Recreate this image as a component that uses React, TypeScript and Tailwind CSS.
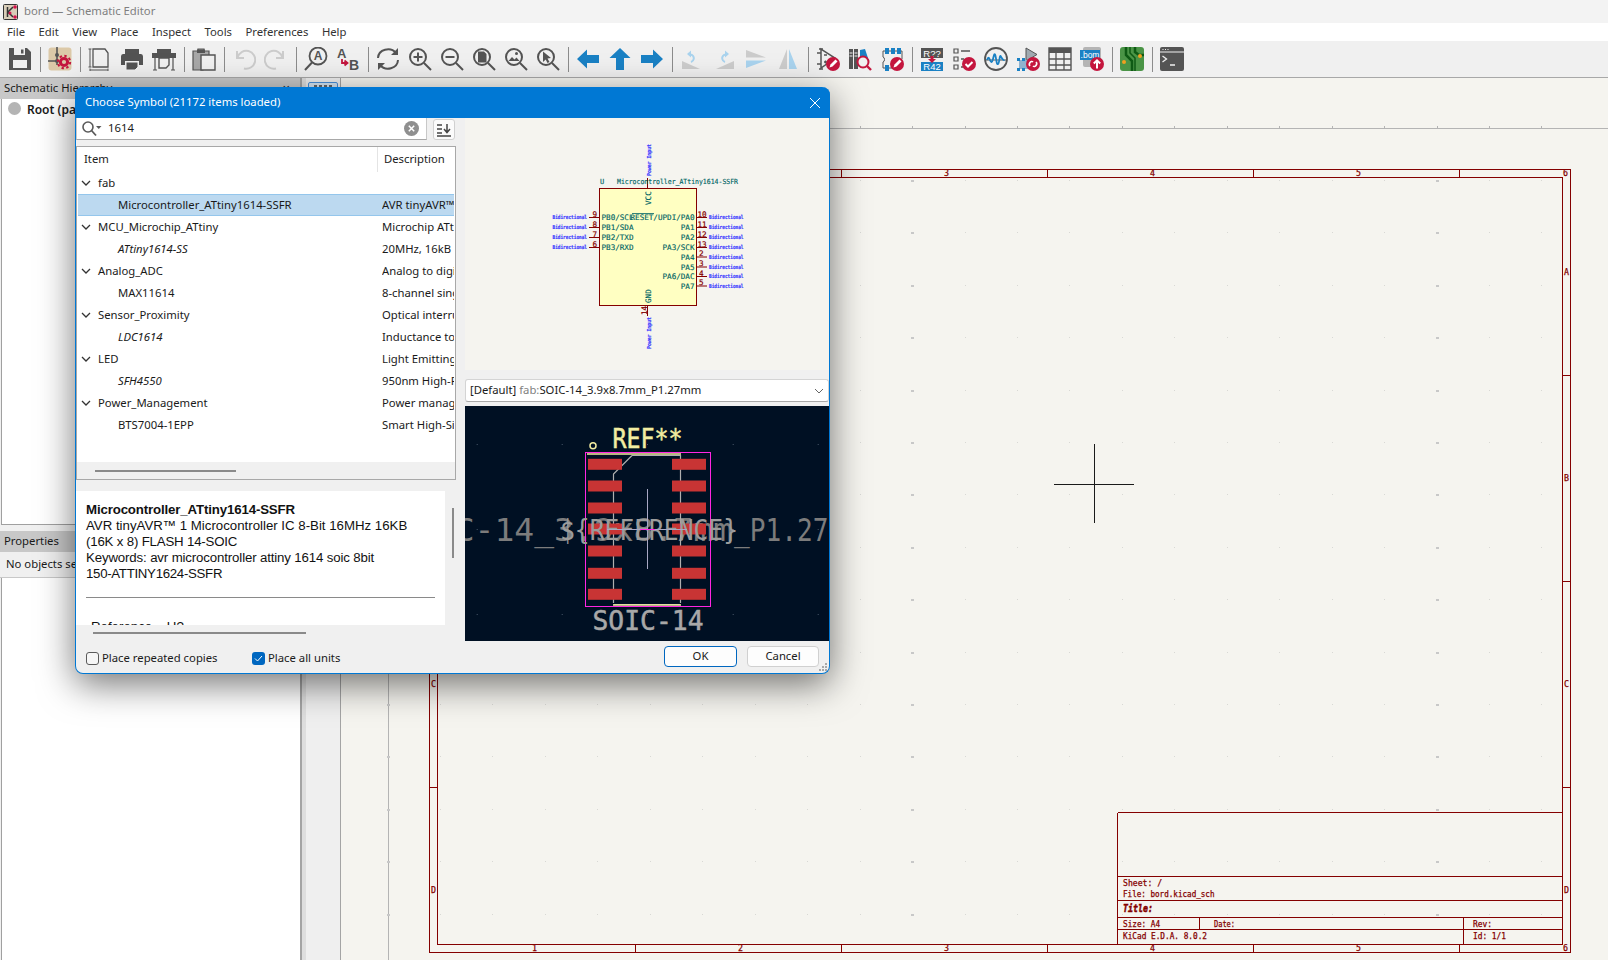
import React from 'react';

const DK = '#545454';
const BL = '#1a81c4';
const RD = '#c4163e';
const LG = '#cccccc';
const LB = '#a9d3ee';
const MONO = "'DejaVu Sans Mono', monospace";
const WIRE = '#840000';

function Ico({ children }: { children: React.ReactNode }) {
  return (
    <div className="w-[32px] h-[36px] flex items-center justify-center shrink-0">
      <svg width="24" height="24" viewBox="0 0 24 24" fill="none">{children}</svg>
    </div>
  );
}

function Sep() {
  return <div className="w-px h-[25px] mx-[3.5px] bg-[#8c8c8c] shrink-0" />;
}

function Lens({ children }: { children?: React.ReactNode }) {
  return (
    <>
      <circle cx="10" cy="10" r="8" stroke={DK} strokeWidth="2" />
      <path d="M16 16l7 7" stroke={DK} strokeWidth="2" />
      {children}
    </>
  );
}

function Badge({ kind }: { kind: 'pen' | 'check' | 'up' | 'link' }) {
  return (
    <>
      <circle cx="17" cy="17" r="7" fill={RD} />
      {kind === 'pen' && <path d="M13.5 20.5l1-3 5-5 2 2-5 5z" fill="#fff" />}
      {kind === 'check' && <path d="M13.5 17l2.5 2.5 4.5-4.5" stroke="#fff" strokeWidth="2" />}
      {kind === 'up' && <path d="M17 21.5v-8M13.8 16.5l3.2-3.2 3.2 3.2" stroke="#fff" strokeWidth="2" />}
      {kind === 'link' && <path d="M14 19c-2-2 1-6 3-4M20 15c2 2-1 6-3 4" stroke="#fff" strokeWidth="1.6" />}
    </>
  );
}

function Toolbar() {
  return (
    <div className="h-[36px] pl-[4px] flex items-center bg-[#f0f0f0] border-b border-[#a8a8a8] box-content shrink-0">
      <Ico>
        <path d="M1 1h18l4 4v18H1z" fill={DK} />
        <path d="M6 1h11v7H6z" fill="#f0f0f0" />
        <path d="M13 2.5h2.5v4H13z" fill={DK} />
        <path d="M5 13h14v8H5z" fill="#f0f0f0" />
      </Ico>
      <Sep />
      <Ico>
        <rect x="0.5" y="0.5" width="23" height="23" rx="3" fill="#dcc9a8" />
        <path d="M9 0v10M0 14h9M9 8v10" stroke={DK} strokeWidth="1.6" />
        <circle cx="9" cy="8" r="2" fill={DK} />
        <circle cx="9" cy="14" r="2" fill={DK} />
        <circle cx="16" cy="15" r="3.6" stroke={RD} strokeWidth="3" />
        <circle cx="16" cy="15" r="6.2" stroke={RD} strokeWidth="2" strokeDasharray="2.4 2.4" />
      </Ico>
      <Sep />
      <Ico>
        <path d="M5 2h12l3 4v14H5z" stroke={DK} strokeWidth="1.3" />
        <path d="M2 2v18M0.5 2h3M0.5 20h3M2 23h18M2 21.5v3M20 21.5v3" stroke={DK} strokeWidth="1" />
      </Ico>
      <Ico>
        <path d="M5 2h14v5H5z" fill={DK} />
        <path d="M3 7h18a2.500 2.500 0 0 1 2 2.500V18h-4v-4H5v4H1V9.500A2.500 2.500 0 0 1 3 7z" fill={DK} />
        <path d="M6 15h12v5l-3 3H6z" fill={DK} stroke="#f0f0f0" strokeWidth="1" />
      </Ico>
      <Ico>
        <path d="M5 2h14v4H5zM0 6h24v5H0z" fill={DK} />
        <path d="M7 11h10v7l-3 3H7z" stroke={DK} strokeWidth="1.4" />
        <path d="M3 11v12M21 11v12M1 23h4M19 23h4" stroke={DK} strokeWidth="1.2" />
      </Ico>
      <Sep />
      <Ico>
        <path d="M1 4h5V2h6v2h5v5h-6v14H1z" fill="#a8a8a8" stroke={DK} strokeWidth="1.2" />
        <path d="M5 2.500h8V6H5z" fill={DK} />
        <path d="M9 8h14v15H9z" fill="#f0f0f0" stroke={DK} strokeWidth="1.4" />
      </Ico>
      <Sep />
      <Ico>
        <path d="M5 4v7h7" stroke={LG} strokeWidth="2" />
        <path d="M5.500 10.500A9 9 0 1 1 12 21.500" stroke={LG} strokeWidth="2" />
      </Ico>
      <Ico>
        <path d="M19 4v7h-7" stroke={LG} strokeWidth="2" />
        <path d="M18.500 10.500A9 9 0 1 0 12 21.500" stroke={LG} strokeWidth="2" />
      </Ico>
      <Sep />
      <Ico>
        <circle cx="14" cy="9" r="8.500" stroke={DK} strokeWidth="1.8" />
        <path d="M8 15.500L1 23" stroke={DK} strokeWidth="2" />
        <text x="14" y="13" textAnchor="middle" fontSize="12" fontWeight="700" fontFamily="'Liberation Sans', sans-serif" fill={DK}>A</text>
      </Ico>
      <Ico>
        <text x="1" y="11" fontSize="13" fontWeight="700" fontFamily="'Liberation Sans', sans-serif" fill={DK}>A</text>
        <text x="13" y="23" fontSize="14" fontWeight="700" fontFamily="'Liberation Sans', sans-serif" fill={DK}>B</text>
        <path d="M6 12v4h5M8.500 13.500L11.500 16l-3 2.500" stroke={RD} strokeWidth="1.800" />
      </Ico>
      <Sep />
      <Ico>
        <path d="M2 11A10 9 0 0 1 20 6" stroke={DK} strokeWidth="2" />
        <path d="M22 13A10 9 0 0 1 4 18" stroke={DK} strokeWidth="2" />
        <path d="M22 1v7h-7zM2 23v-7h7z" fill={DK} />
      </Ico>
      <Ico>
        <Lens />
        <path d="M10 5.500v9M5.500 10h9" stroke={DK} strokeWidth="2" />
      </Ico>
      <Ico>
        <Lens />
        <path d="M5.500 10h9" stroke={DK} strokeWidth="2" />
      </Ico>
      <Ico>
        <Lens />
        <path d="M6 4.500h6l2.500 2.500v8.500H6z" fill={DK} />
      </Ico>
      <Ico>
        <Lens />
        <path d="M4.500 14l3.500-4 2.500 2.500 2-2L15.500 14z" fill={DK} />
        <circle cx="12.500" cy="6.500" r="1.500" fill={DK} />
      </Ico>
      <Ico>
        <Lens />
        <path d="M7 4.500l8 6.500-3.500.5 2 3.500-2 1-1.800-3.500L7 15z" fill={DK} />
      </Ico>
      <Sep />
      <Ico>
        <path d="M1 12l10-9.500V8h12v8H11v5.500z" fill={BL} />
      </Ico>
      <Ico>
        <path d="M12 1l10.500 10H16v12H8V11H1.500z" fill={BL} />
      </Ico>
      <Ico>
        <path d="M23 12l-10-9.500V8H1v8h12v5.500z" fill={BL} />
      </Ico>
      <Sep />
      <Ico>
        <path d="M2 22V14l18 8z" fill={LG} />
        <path d="M11 15c3-1 4-5 1-7l-2.500-.5" stroke={LB} strokeWidth="2" />
        <path d="M11 3.500L7 7l4 3.500z" fill={LB} />
      </Ico>
      <Ico>
        <path d="M22 22V14L4 22z" fill={LG} />
        <path d="M13 15c-3-1-4-5-1-7l2.500-.5" stroke={LB} strokeWidth="2" />
        <path d="M13 3.500L17 7l-4 3.500z" fill={LB} />
      </Ico>
      <Ico>
        <path d="M2 3l20 7.500H2z" fill={LG} />
        <path d="M2 21l20-7.500H2z" fill={LB} />
      </Ico>
      <Ico>
        <path d="M11 2v20H3z" fill={LG} />
        <path d="M13 2v20h8z" fill={LB} />
      </Ico>
      <Sep />
      <Ico>
        <path d="M5 2v19L19 11z" stroke={DK} strokeWidth="1.500" />
        <path d="M1 6h4M1 17h4M3 2h4M3 22h4M8 8h3M8 15h3M9.500 13.500v3" stroke={DK} strokeWidth="1.300" />
        <Badge kind="pen" />
      </Ico>
      <Ico>
        <path d="M1 2h4v20H1zM6 2h4v20H6z" fill={DK} />
        <path d="M1.500 6h3M1.500 9h3M6.500 6h3M6.500 9h3" stroke="#f0f0f0" strokeWidth="1" />
        <path d="M12 3l5-1 4 12h-9z" fill={BL} />
        <circle cx="15" cy="15" r="5.500" fill="#f0f0f0" stroke={RD} strokeWidth="2" />
        <path d="M19 19l4 4" stroke={RD} strokeWidth="2.400" />
      </Ico>
      <Ico>
        <path d="M3 4h19v8M3 4v6c2 0 2 5 0 5v6h9" stroke={DK} strokeWidth="1" />
        <path d="M5 1h4v6H5zM11 1h4v6h-4zM17 1h4v6h-4zM5 18h4v6H5z" fill={BL} />
        <Badge kind="pen" />
      </Ico>
      <Sep />
      <Ico>
        <path d="M1 1h22v10H1z" fill={DK} />
        <path d="M1 15h22v9H1z" fill={BL} />
        <text x="12" y="9.500" textAnchor="middle" fontSize="9.500" fontFamily="'Liberation Sans', sans-serif" fill="#fff">R??</text>
        <text x="12" y="23" textAnchor="middle" fontSize="9.500" fontFamily="'Liberation Sans', sans-serif" fill="#fff">R42</text>
        <path d="M10.500 9h3v3h2.500L12 16l-4-4h2.500z" fill={RD} />
      </Ico>
      <Ico>
        <path d="M2 2h4v4H2zM2 10h4v4H2zM2 18h4v4H2z" stroke={DK} strokeWidth="1.200" />
        <path d="M9 4h9M9 12h3M9 20h2" stroke={DK} strokeWidth="1.400" />
        <Badge kind="check" />
      </Ico>
      <Ico>
        <circle cx="12" cy="12" r="11" stroke={DK} strokeWidth="1.800" />
        <path d="M2 13h20" stroke={DK} strokeWidth="1" />
        <path d="M3 13c1-3 2-3 3 0s2 3 3-1 1.500-7 2.500-3 1 9 2.500 8 1.500-9 2.500-8 2 5 4 4" stroke={BL} strokeWidth="1.800" />
      </Ico>
      <Ico>
        <path d="M10 1v13L21 7.500z" fill="#9fa9b0" stroke={DK} strokeWidth="1" />
        <path d="M3 13h14v9H3z" fill="#8fb3cf" />
        <path d="M1 11h3v3H1zM6 11h3v3H6zM1 21h3v3H1zM6 21h3v3H6z" fill={BL} />
        <Badge kind="link" />
      </Ico>
      <Ico>
        <path d="M1 1h22v22H1z" stroke={DK} strokeWidth="1.400" />
        <path d="M1 1h22v5H1z" fill={DK} />
        <path d="M8 6v17M16 6v17M1 12h22M1 18h22" stroke={DK} strokeWidth="1.300" />
      </Ico>
      <Ico>
        <rect x="3" y="0" width="18" height="20" rx="2" fill="#b4b4b4" />
        <path d="M0 3h20v10H0z" fill={BL} />
        <text x="10" y="11" textAnchor="middle" fontSize="8.500" fontFamily="'Liberation Sans', sans-serif" fill="#fff">.bom</text>
        <Badge kind="up" />
      </Ico>
      <Sep />
      <Ico>
        <rect x="0" y="0" width="24" height="24" rx="3" fill="#4a9446" />
        <path d="M6 0v8l6 6v10M15 0v5l4 3h5" stroke="#0e5a14" strokeWidth="2.500" />
        <path d="M10 0v6l5 5v13" stroke="#0e5a14" strokeWidth="1.500" />
        <circle cx="4" cy="15" r="2" fill="#f0a020" />
        <circle cx="20" cy="9" r="2" fill="#f0a020" />
      </Ico>
      <Sep />
      <Ico>
        <rect x="0" y="0" width="24" height="24" rx="2" fill={DK} />
        <path d="M0 5h24" stroke="#f0f0f0" strokeWidth="1" />
        <path d="M2.500 2.500h1M5 2.500h1M7.500 2.500h1" stroke="#f0f0f0" strokeWidth="1.200" />
        <path d="M2.500 9l4 3-4 3M10 18h5" stroke="#f0f0f0" strokeWidth="1.300" />
      </Ico>
    </div>
  );
}

const dotX = Array.from({ length: 23 }, (_, k) => 440 + 52.45 * (k - 1));
const dotY = Array.from({ length: 16 }, (_, k) => 180 + 52.4 * k);

function wtext(x: number, y: number, s: string, w: number, size = 8, extra: React.SVGProps<SVGTextElement> = {}) {
  return (
    <text key={s + x} x={x} y={y} fontSize={size} fontFamily={MONO} fill={WIRE} stroke={WIRE} strokeWidth="0.25" textLength={w} lengthAdjust="spacingAndGlyphs" {...extra}>
      {s}
    </text>
  );
}

function Canvas() {
  const xTicks = [635, 841, 1047, 1253, 1459];
  const yTicks = [375, 581, 787];
  return (
    <svg className="flex-1 min-w-0 h-full block" viewBox="341 78 1267 882" fill="none">
      <path d="M341 128.500H1608M388.500 128.500V960" stroke="#b4b4b4" />
      {dotX.map((x) => (
        <rect key={x} x={Math.round(x)} y="126" width="1" height="2" fill="#b4b4b4" />
      ))}
      {dotX.map((x, k) =>
        dotY.map((y) => {
          const big = k === 0 || k === 10 || k === 20;
          return <rect key={x + '-' + y} x={Math.round(x) - (big ? 1 : 0)} y={Math.round(y)} width={big ? 3 : 1} height={big ? 2 : 1} fill={big ? '#c8c8c8' : '#d8d8d4'} />;
        }),
      )}
      <g stroke={WIRE} shapeRendering="crispEdges">
        <path d="M429.500 169.500H1570.500V952.500H429.500z" />
        <path d="M437.500 177.500H1562.500V944.500H437.500z" />
        {xTicks.map((x) => (
          <path key={x} d={`M${x + 0.5} 169V177M${x + 0.5} 944V952`} />
        ))}
        {yTicks.map((y) => (
          <path key={y} d={`M429 ${y + 0.5}H437M1562 ${y + 0.5}H1570`} />
        ))}
        <path d="M1117.500 812.500H1562M1117.500 812.500V944M1117.500 876.500H1562M1117.500 900.500H1562M1117.500 917.500H1562M1117.500 929.500H1562M1199.500 917.500V929.500M1463.500 917.500V944" />
      </g>
      {[['1', 532], ['2', 738], ['3', 944], ['4', 1150], ['5', 1356], ['6', 1563]].map(([s, x]) => (
        <React.Fragment key={s}>
          {wtext(Number(x), 176, String(s), 5, 8)}
          {wtext(Number(x), 951, String(s), 5, 8)}
        </React.Fragment>
      ))}
      {[['A', 275], ['B', 481], ['C', 687], ['D', 893]].map(([s, y]) => (
        <React.Fragment key={s}>
          {wtext(431, Number(y), String(s), 5, 8)}
          {wtext(1564, Number(y), String(s), 5, 8)}
        </React.Fragment>
      ))}
      {wtext(1123, 886, 'Sheet: /', 39)}
      {wtext(1123, 897, 'File: bord.kicad_sch', 91.500)}
      {wtext(1123, 912, 'Title:', 30, 11, { fontWeight: 700, fontStyle: 'italic', strokeWidth: 0.5 })}
      {wtext(1123, 927, 'Size: A4', 37)}
      {wtext(1214, 927, 'Date:', 21)}
      {wtext(1473, 927, 'Rev:', 19)}
      {wtext(1123, 939, 'KiCad E.D.A. 8.0.2', 84)}
      {wtext(1473, 939, 'Id: 1/1', 33)}
      <path d="M1054 484.500H1134M1094.500 444V523" stroke="#1a1a1a" />
    </svg>
  );
}

function SymbolPreview() {
  const T = '#006464';
  const B = '#3c3cff';
  const leftPins: [number, string, string][] = [
    [217, '9', 'PB0/SCL'],
    [227, '8', 'PB1/SDA'],
    [237, '7', 'PB2/TXD'],
    [247, '6', 'PB3/RXD'],
  ];
  const rightPins: [number, string, string][] = [
    [217, '10', 'RESET/UPDI/PA0'],
    [227, '11', 'PA1'],
    [237, '12', 'PA2'],
    [247, '13', 'PA3/SCK'],
    [256.500, '2', 'PA4'],
    [266.500, '3', 'PA5'],
    [276, '4', 'PA6/DAC'],
    [285.500, '5', 'PA7'],
  ];
  return (
    <svg className="w-full h-[252px] block bg-[#f5f4ef]" viewBox="465 118 364 252" fill="none">
      <rect x="599.500" y="188.500" width="97" height="117" fill="#ffffc2" stroke={WIRE} />
      <path d="M647.500 178V188M647.500 306V316" stroke={WIRE} />
      {leftPins.map(([y, n, name]) => (
        <g key={n} fontFamily={MONO}>
          <path d={`M589 ${y + 0.5}H599`} stroke={WIRE} />
          <text x="592.500" y={y - 0.5} fontSize="7.600" fill={WIRE} stroke={WIRE} strokeWidth="0.2">{n}</text>
          <text x="601.500" y={y + 3} fontSize="7.600" fill={T} stroke={T} strokeWidth="0.15">{name}</text>
          <text x="587" y={y + 2} fontSize="5.500" fontWeight="700" fill={B} stroke={B} strokeWidth="0.2" textAnchor="end" textLength="34.500" lengthAdjust="spacingAndGlyphs">Bidirectional</text>
        </g>
      ))}
      {rightPins.map(([y, n, name]) => (
        <g key={n} fontFamily={MONO}>
          <path d={`M697 ${y + 0.5}H707`} stroke={WIRE} />
          <text x={n.length > 1 ? 697.500 : 699} y={y - 0.5} fontSize="7.600" fill={WIRE} stroke={WIRE} strokeWidth="0.2">{n}</text>
          <text x="694.500" y={y + 3} fontSize="7.600" fill={T} stroke={T} strokeWidth="0.15" textAnchor="end">{name}</text>
          <text x="709" y={y + 2} fontSize="5.500" fontWeight="700" fill={B} stroke={B} strokeWidth="0.2" textLength="34.500" lengthAdjust="spacingAndGlyphs">Bidirectional</text>
        </g>
      ))}
      <path d="M632 213.500H654" stroke={T} strokeWidth="0.800" />
      <g fontFamily={MONO}>
        <text x="600" y="184" fontSize="7" fill={T} stroke={T} strokeWidth="0.15">U</text>
        <text x="617" y="184" fontSize="7" fill={T} stroke={T} strokeWidth="0.15" textLength="121" lengthAdjust="spacingAndGlyphs">Microcontroller_ATtiny1614-SSFR</text>
        <text transform="translate(651 205) rotate(-90)" fontSize="7.600" fill={T} stroke={T} strokeWidth="0.15">VCC</text>
        <text transform="translate(651 303) rotate(-90)" fontSize="7.600" fill={T} stroke={T} strokeWidth="0.15">GND</text>
        <text transform="translate(647 315) rotate(-90)" fontSize="7.600" fill={WIRE} stroke={WIRE} strokeWidth="0.2">14</text>
        <text transform="translate(650.500 176) rotate(-90)" fontSize="5.500" fontWeight="700" fill={B} stroke={B} strokeWidth="0.2" textLength="32" lengthAdjust="spacingAndGlyphs">Power Input</text>
        <text transform="translate(650.500 349) rotate(-90)" fontSize="5.500" fontWeight="700" fill={B} stroke={B} strokeWidth="0.2" textLength="32" lengthAdjust="spacingAndGlyphs">Power Input</text>
      </g>
    </svg>
  );
}

function FootprintPreview() {
  const padY = [464.300, 486, 508, 529, 551, 573.300, 594.300];
  const SILK = '#f2eda1';
  return (
    <svg className="w-full h-[235px] block bg-[#001023]" viewBox="465 406 364 235" fill="none">
      {[476.700, 561.700, 647, 732.700, 817.700].map((x) =>
        [444, 529, 614].map((y) => <rect key={x + '-' + y} x={x} y={y} width="1" height="1" fill="#48586a" />),
      )}
      <text x="395" y="541" fontSize="32" fontFamily={MONO} fill="#7c7c7c" textLength="338" lengthAdjust="spacingAndGlyphs">SOIC-14_3.9x8.7mm</text>
      <text x="734" y="541" fontSize="32" fontFamily={MONO} fill="#7c7c7c" textLength="126" lengthAdjust="spacingAndGlyphs">_P1.27mm</text>
      <path d="M632 455.500H680.500V603M613.500 603V474L632 455.500" stroke="#afafaf" strokeWidth="1.200" />
      <path d="M613.500 604.500H680.500" stroke="#afafaf" strokeWidth="1.200" />
      <path d="M587 454H681M613 605H681" stroke={SILK} strokeWidth="1.500" />
      <rect x="585.500" y="452.500" width="125" height="154" stroke="#ff26e2" />
      {padY.map((y) => (
        <g key={y} fill="#c83434">
          <rect x="588" y={y - 5.500} width="34" height="11" />
          <rect x="672" y={y - 5.500} width="34" height="11" />
        </g>
      ))}
      <text x="560" y="540" fontSize="28" fontFamily={MONO} fill="#9c9c9c" textLength="178" lengthAdjust="spacingAndGlyphs">{'${REFERENCE}'}</text>
      <path d="M647.500 489V569M607 529.500H687" stroke="#a8a8c4" />
      <path d="M640 529.500H655" stroke="#ff26e2" />
      <circle cx="593" cy="445.700" r="3" stroke={SILK} strokeWidth="1.500" />
      <text x="612.500" y="448" fontSize="26" fontFamily={MONO} fill={SILK} stroke={SILK} strokeWidth="0.5" textLength="70" lengthAdjust="spacingAndGlyphs">REF**</text>
      <text x="592.500" y="630" fontSize="26" fontFamily={MONO} fill="#a8a8a8" stroke="#a8a8a8" strokeWidth="0.5" textLength="111" lengthAdjust="spacingAndGlyphs">SOIC-14</text>
    </svg>
  );
}

type Row = { name: string; desc?: string; group?: boolean; italic?: boolean; selected?: boolean };

const rows: Row[] = [
  { name: 'fab', group: true },
  { name: 'Microcontroller_ATtiny1614-SSFR', desc: 'AVR tinyAVR™ 1 Microcontroller IC', selected: true },
  { name: 'MCU_Microchip_ATtiny', desc: 'Microchip ATtiny', group: true },
  { name: 'ATtiny1614-SS', desc: '20MHz, 16kB Flash', italic: true },
  { name: 'Analog_ADC', desc: 'Analog to digital', group: true },
  { name: 'MAX11614', desc: '8-channel single' },
  { name: 'Sensor_Proximity', desc: 'Optical interrupter', group: true },
  { name: 'LDC1614', desc: 'Inductance to digital', italic: true },
  { name: 'LED', desc: 'Light Emitting Diodes', group: true },
  { name: 'SFH4550', desc: '950nm High-Power', italic: true },
  { name: 'Power_Management', desc: 'Power management', group: true },
  { name: 'BTS7004-1EPP', desc: 'Smart High-Side' },
];

function Tree() {
  return (
    <div className="h-[334px] border border-[#a8a8a8] bg-white flex flex-col overflow-hidden">
      <div className="h-[25px] shrink-0 flex items-center text-[11.3px] text-[#222]">
        <div className="w-[301px] pl-[7px] h-full flex items-center border-r border-[#e4e4e4]">Item</div>
        <div className="pl-[6px]">Description</div>
      </div>
      <div className="flex-1 px-[1px]">
        {rows.map((r) => (
          <div
            key={r.name}
            className={`h-[22px] flex items-center text-[11.3px] text-[#1a1a1a] whitespace-nowrap overflow-hidden ${r.selected ? 'bg-[#bcd9f0] border-y border-[#94c6ec]' : ''}`}
          >
            <div className={`w-[304px] shrink-0 flex items-center ${r.group ? 'pl-[2px]' : 'pl-[40px]'} ${r.italic ? 'italic' : ''}`}>
              {r.group && (
                <svg width="12" height="12" viewBox="0 0 12 12" fill="none" className="mr-[6px] shrink-0">
                  <path d="M2 4l4 4 4-4" stroke="#333" strokeWidth="1.300" />
                </svg>
              )}
              {r.name}
            </div>
            <div className="overflow-hidden flex-1">{r.desc}</div>
          </div>
        ))}
      </div>
      <div className="h-[17px] bg-[#f0f0f0] shrink-0 flex items-center pl-[18px]">
        <div className="w-[141px] h-[2px] bg-[#8a8a8a]" />
      </div>
    </div>
  );
}

function Dialog() {
  return (
    <div className="absolute left-[75px] top-[87px] w-[755px] h-[587px] flex flex-col bg-[#f0f0f0] border border-t-0 border-[#0078d4] rounded-t-[8px] rounded-b-[8px] shadow-[0_10px_36px_rgba(0,0,0,0.55)]">
      <div className="h-[31px] -mx-px bg-[#0078d4] rounded-t-[8px] flex items-center justify-between pl-[10px] pr-[9px] shrink-0 text-white text-[11.3px]">
        <span>Choose Symbol (21172 items loaded)</span>
        <svg width="12" height="12" viewBox="0 0 12 12" fill="none">
          <path d="M1 1l10 10M11 1L1 11" stroke="#fff" strokeWidth="1" />
        </svg>
      </div>
      <div className="flex flex-1 min-h-0">
        <div className="w-[380px] shrink-0 flex flex-col">
          <div className="h-[22px] flex gap-[6px] shrink-0">
            <div className="w-[351px] bg-white border border-t-0 border-[#c8c8c8] border-b-[#a8a8a8] flex items-center pl-[5px] pr-[7px] text-[11.3px] text-[#1a1a1a]">
              <svg width="20" height="16" viewBox="0 0 20 16" fill="none" className="mr-[6px]">
                <circle cx="6" cy="6" r="5" stroke="#5a5a5a" strokeWidth="1.600" />
                <path d="M9.500 9.500l4.500 5" stroke="#5a5a5a" strokeWidth="1.800" />
                <path d="M14 5h5.500l-2.750 3z" fill="#5a5a5a" />
              </svg>
              <span className="flex-1">1614</span>
              <svg width="15" height="15" viewBox="0 0 15 15" fill="none">
                <circle cx="7.500" cy="7.500" r="7.500" fill="#8f8f8f" />
                <path d="M4.800 4.800l5.400 5.400M10.200 4.800l-5.400 5.400" stroke="#fff" strokeWidth="1.500" />
              </svg>
            </div>
            <div className="w-[22px] h-[21px] mt-[1px] bg-[#fbfbfb] border border-[#d0d0d0] rounded-[3px] flex items-center justify-center">
              <svg width="16" height="14" viewBox="0 0 16 14" fill="none">
                <path d="M1 2h5M1 6h5M1 10h5M1 13h14" stroke="#444" strokeWidth="1.300" />
                <path d="M11 1v8M8 6l3 3.500L14 6" stroke="#444" strokeWidth="1.500" />
              </svg>
            </div>
          </div>
          <div className="mt-[6px]">
            <Tree />
          </div>
          <div className="mt-[11px] flex h-[134px]">
            <div className="w-[369px] h-full bg-white px-[10px] pt-[11px] overflow-hidden font-['Liberation_Sans',sans-serif] text-[13.25px] leading-[16px] text-[#111] whitespace-nowrap">
              <div className="font-bold tracking-[-0.14px]">Microcontroller_ATtiny1614-SSFR</div>
              <div>AVR tinyAVR™ 1 Microcontroller IC 8-Bit 16MHz 16KB</div>
              <div className="tracking-[-0.18px]">(16K x 8) FLASH 14-SOIC</div>
              <div className="tracking-[-0.14px]">Keywords: avr microcontroller attiny 1614 soic 8bit</div>
              <div className="tracking-[-0.3px]">150-ATTINY1624-SSFR</div>
              <div className="h-px bg-[#8a8a8a] mt-[15px] mb-[21px]" />
              <div className="pl-[5px]">Reference&nbsp;&nbsp;&nbsp;&nbsp;U?</div>
            </div>
            <div className="flex-1 pl-[7px] pt-[17px]">
              <div className="w-[2px] h-[50px] bg-[#8a8a8a]" />
            </div>
          </div>
          <div className="h-[16px] flex items-center pl-[17px]">
            <div className="w-[213px] h-[2px] bg-[#8a8a8a]" />
          </div>
        </div>
        <div className="w-[364px] ml-[9px] shrink-0 flex flex-col">
          <SymbolPreview />
          <div className="mt-[9px] h-[23px] bg-white border border-[#d4d4d4] border-b-[#a8a8a8] rounded-[3px] flex items-center justify-between pl-[4px] pr-[3px] text-[11.3px] text-[#1a1a1a]">
            <span>
              [Default] <span className="text-[#7f7f7f]">fab:</span>SOIC-14_3.9x8.7mm_P1.27mm
            </span>
            <svg width="12" height="12" viewBox="0 0 12 12" fill="none">
              <path d="M2 4l4 4 4-4" stroke="#666" strokeWidth="1" />
            </svg>
          </div>
          <div className="mt-[4px]">
            <FootprintPreview />
          </div>
        </div>
      </div>
      <div className="h-[32px] shrink-0 flex items-center pt-[2px] pl-[10px] pr-[10px] text-[11.3px] text-[#1a1a1a]">
        <div className="w-[13px] h-[13px] rounded-[3px] border border-[#5a5a5a] bg-[#f6f6f6] mr-[3px]" />
        <span className="w-[150px]">Place repeated copies</span>
        <div className="w-[13px] h-[13px] rounded-[3px] bg-[#0067c0] flex items-center justify-center mr-[3px]">
          <svg width="9" height="9" viewBox="0 0 9 9" fill="none">
            <path d="M1 4.500l2.500 2.500L8 2" stroke="#fff" strokeWidth="1" />
          </svg>
        </div>
        <span>Place all units</span>
        <div className="ml-auto flex gap-[10px] -mt-[3px]">
          <button className="w-[73px] h-[21px] rounded-[4px] bg-[#fdfdfd] border border-[#0067c0] text-[11.3px]">OK</button>
          <button className="w-[72px] h-[21px] rounded-[4px] bg-[#fdfdfd] border border-[#d0d0d0] text-[11.3px]">Cancel</button>
        </div>
      </div>
      <svg width="8" height="8" viewBox="0 0 8 8" className="absolute right-[2px] bottom-[2px]">
        <path d="M6 0h2v2H6zM3 3h2v2H3zM6 3h2v2H6zM0 6h2v2H0zM3 6h2v2H3zM6 6h2v2H6z" fill="#a8a8a8" />
      </svg>
    </div>
  );
}

function LeftPanel() {
  return (
    <div className="w-[300px] shrink-0 h-full flex flex-col bg-[#f0f0f0] text-[11.3px] text-[#1a1a1a]">
      <div className="h-[21px] pl-[4px] pr-[10px] bg-[#c8c8c8] flex items-center justify-between shrink-0">
        <span>Schematic Hierarchy</span>
        <span className="text-[13px]">×</span>
      </div>
      <div className="h-[426px] bg-white border-l border-b border-[#a0a0a0] ml-[1px] flex items-start pt-[2px] pl-[6px] gap-[6px]">
        <span className="w-[13px] h-[13px] mt-[1px] rounded-full bg-[#b4b4b4]" />
        <span className="font-semibold text-[12px]">Root (page 1)</span>
      </div>
      <div className="h-[6px] shrink-0" />
      <div className="h-[21px] pl-[4px] bg-[#c8c8c8] flex items-center shrink-0">Properties</div>
      <div className="h-[26px] pl-[6px] flex items-center border-b border-[#c8c8c8] shrink-0">No objects selected</div>
      <div className="flex-1 bg-white border-l border-[#a0a0a0] ml-[1px]" />
    </div>
  );
}

export default function App() {
  return (
    <div className="relative w-[1608px] h-[960px] overflow-hidden flex flex-col bg-[#f0f0f0] font-['Noto_Sans',sans-serif]">
      <div className="h-[23px] bg-[#f3f3f3] flex items-center pl-[3px] shrink-0 text-[11.3px] text-[#7f7f7f]">
        <svg width="15" height="16" viewBox="0 0 15 16" fill="none" className="mr-[6px]">
          <rect x="0.500" y="0.500" width="14" height="15" rx="1" fill="#d8cdb8" stroke="#333" />
          <path d="M4.500 3v10M10 3L5 8l5 5" stroke="#333" strokeWidth="1.500" />
          <circle cx="12" cy="3" r="1.800" fill="#d0104c" />
          <circle cx="12" cy="13" r="1.800" fill="#d0104c" />
          <circle cx="7" cy="9" r="1.500" fill="#d0104c" />
        </svg>
        <span>bord — Schematic Editor</span>
      </div>
      <div className="h-[18px] bg-white flex items-center pl-[7px] gap-[13.5px] shrink-0 text-[11.3px] text-[#333]">
        {['File', 'Edit', 'View', 'Place', 'Inspect', 'Tools', 'Preferences', 'Help'].map((m) => (
          <span key={m}>{m}</span>
        ))}
      </div>
      <Toolbar />
      <div className="flex-1 min-h-0 flex">
        <LeftPanel />
        <div className="w-[2px] bg-[#a4a4a4] shrink-0" />
        <div className="w-[4px] bg-[#dedede] shrink-0" />
        <div className="w-[34px] shrink-0 bg-[#efefef] pt-[4px] pl-[2px]">
          <div className="w-[30px] h-[28px] border border-[#4a90d9] bg-[#d6e6f4] rounded-[2px] flex justify-center gap-[2px] pt-[2px]">
            <span className="w-[3px] h-[3px] bg-[#666]" />
            <span className="w-[3px] h-[3px] bg-[#666]" />
            <span className="w-[3px] h-[3px] bg-[#666]" />
            <span className="w-[3px] h-[3px] bg-[#666]" />
          </div>
        </div>
        <div className="flex-1 min-w-0 bg-[#f5f4ef] border-l border-[#a4a4a4] flex">
          <Canvas />
        </div>
      </div>
      <Dialog />
    </div>
  );
}
